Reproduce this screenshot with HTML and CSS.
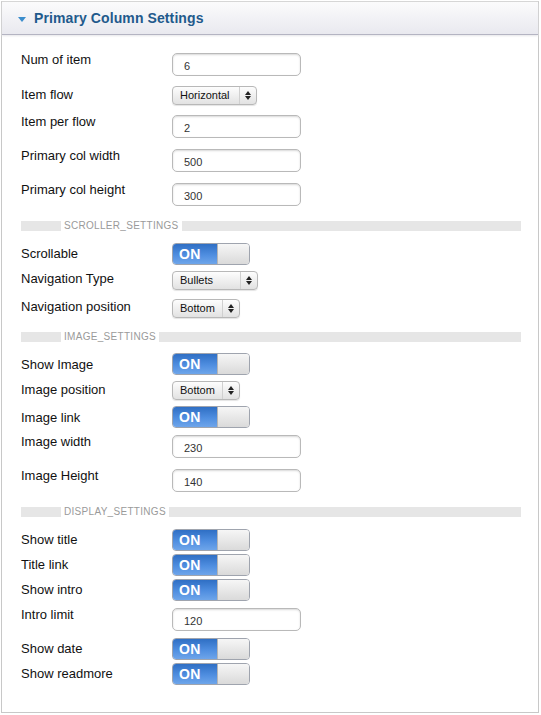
FILE: index.html
```html
<!DOCTYPE html>
<html lang="en">
<head>
  <meta charset="UTF-8">
  <title>Primary Column Settings</title>
  <link rel="stylesheet" href="styles.css">
</head>
<body>

  <div class="panel">
    <div class="panel-head">
      <span class="caret"></span>
      <h2>Primary Column Settings</h2>
    </div>

    <div class="panel-body">
      <div class="row row-input">
        <label>Num of item</label>
        <div class="field"><input type="text" value="6"></div>
      </div>
      <div class="row row-select">
        <label>Item flow</label>
        <div class="select" style="width:85px">Horizontal<span class="arrows"></span></div>
      </div>
      <div class="row row-input">
        <label>Item per flow</label>
        <div class="field"><input type="text" value="2"></div>
      </div>
      <div class="row row-input">
        <label>Primary col width</label>
        <div class="field"><input type="text" value="500"></div>
      </div>
      <div class="row row-input">
        <label>Primary col height</label>
        <div class="field"><input type="text" value="300"></div>
      </div>

      <div class="section"><span>SCROLLER_SETTINGS</span></div>

      <div class="row row-toggle">
        <label>Scrollable</label>
        <div class="toggle"><span class="on">ON</span><span class="knob"></span></div>
      </div>
      <div class="row row-select">
        <label>Navigation Type</label>
        <div class="select" style="width:86px">Bullets<span class="arrows"></span></div>
      </div>
      <div class="row row-select">
        <label>Navigation position</label>
        <div class="select" style="width:68px">Bottom<span class="arrows"></span></div>
      </div>

      <div class="section"><span>IMAGE_SETTINGS</span></div>

      <div class="row row-toggle">
        <label>Show Image</label>
        <div class="toggle"><span class="on">ON</span><span class="knob"></span></div>
      </div>
      <div class="row row-select">
        <label>Image position</label>
        <div class="select" style="width:68px">Bottom<span class="arrows"></span></div>
      </div>
      <div class="row row-toggle">
        <label>Image link</label>
        <div class="toggle"><span class="on">ON</span><span class="knob"></span></div>
      </div>
      <div class="row row-input">
        <label>Image width</label>
        <div class="field"><input type="text" value="230"></div>
      </div>
      <div class="row row-input">
        <label>Image Height</label>
        <div class="field"><input type="text" value="140"></div>
      </div>

      <div class="section"><span>DISPLAY_SETTINGS</span></div>

      <div class="row row-toggle">
        <label>Show title</label>
        <div class="toggle"><span class="on">ON</span><span class="knob"></span></div>
      </div>
      <div class="row row-toggle">
        <label>Title link</label>
        <div class="toggle"><span class="on">ON</span><span class="knob"></span></div>
      </div>
      <div class="row row-toggle">
        <label>Show intro</label>
        <div class="toggle"><span class="on">ON</span><span class="knob"></span></div>
      </div>
      <div class="row row-input">
        <label>Intro limit</label>
        <div class="field"><input type="text" value="120"></div>
      </div>
      <div class="row row-toggle">
        <label>Show date</label>
        <div class="toggle"><span class="on">ON</span><span class="knob"></span></div>
      </div>
      <div class="row row-toggle">
        <label>Show readmore</label>
        <div class="toggle"><span class="on">ON</span><span class="knob"></span></div>
      </div>
    </div>
  </div>

</body>
</html>
```

FILE: styles.css
```css
body {
  margin: 0;
  background: #fff;
  font-family: 'Liberation Sans', Arial, sans-serif;
  color: #111;
}

.panel {
  margin: 1px 0 0 1px;
  width: 536px;
  height: 710px;
  border: 1px solid #c8c8c8;
  border-top-color: #d4d4d4;
  background: #fff;
}

.panel-head {
  height: 32px;
  display: flex;
  align-items: center;
  padding-left: 15px;
  background: linear-gradient(#fbfbfc, #e9e9ef);
  border-bottom: 1px solid #b4b4c2;
  box-shadow: 0 1px 2px #e6e6ea;
}

.caret {
  width: 0;
  height: 0;
  border-left: 4px solid transparent;
  border-right: 4px solid transparent;
  border-top: 5px solid #3b8dcc;
  margin: 2px 8px 0 1px;
}

.panel-head h2 {
  margin: 0;
  font-size: 14px;
  font-weight: bold;
  color: #1f5a8c;
  letter-spacing: 0.1px;
}

.panel-body {
  padding: 12.5px 0 0 19px;
}

.row {
  display: flex;
  align-items: center;
}

.row label {
  width: 151px;
  font-size: 13px;
  color: #111;
}

.row-input {
  padding: 5.5px 0;
  align-items: flex-start;
}

.row-input label {
  line-height: 14px;
}

.row-select {
  padding: 4.5px 0;
}

.row-select label {
  padding-bottom: 3px;
}

.row-toggle {
  padding: 1.5px 0;
}

.field input {
  display: block;
  width: 129px;
  height: 23px;
  margin: 0;
  box-sizing: border-box;
  border: 1px solid #b9b9b9;
  border-radius: 5px;
  box-shadow: inset 0 1px 2px #d8d8d8;
  padding: 3px 0 0 11px;
  font-family: 'Liberation Sans', Arial, sans-serif;
  font-size: 11px;
  color: #333;
  outline: none;
}

.select {
  position: relative;
  height: 19px;
  box-sizing: border-box;
  border: 1px solid #b8b8b8;
  border-radius: 4px;
  background: linear-gradient(#fdfdfd, #e2e2e2);
  box-shadow: 0 1px 1px #e4e4e4;
  font-size: 11px;
  line-height: 17px;
  padding-left: 7px;
  color: #111;
}

.arrows {
  position: absolute;
  right: 0;
  top: 0;
  width: 16px;
  height: 17px;
  border-left: 1px solid #d0d0d0;
}

.arrows::before,
.arrows::after {
  content: "";
  position: absolute;
  left: 5px;
  border-left: 3px solid transparent;
  border-right: 3px solid transparent;
}

.arrows::before {
  top: 4px;
  border-bottom: 4px solid #222;
}

.arrows::after {
  top: 9px;
  border-top: 4px solid #222;
}

.toggle {
  display: flex;
  width: 78px;
  height: 22px;
  box-sizing: border-box;
  border: 1px solid #9fa4ae;
  border-radius: 4px;
  overflow: hidden;
}

.toggle .on {
  width: 44px;
  background: linear-gradient(#2f6fc4, #4f8ee0 55%, #6ea5ea);
  color: #fff;
  font-weight: bold;
  font-size: 14px;
  line-height: 21px;
  padding-left: 6px;
  box-sizing: border-box;
  letter-spacing: 0.3px;
}

.toggle .knob {
  flex: 1;
  background: linear-gradient(#f6f6f6, #dadada);
  border-left: 1px solid #b5b5b5;
}

.section {
  display: flex;
  align-items: center;
  width: 500px;
  height: 10px;
  margin: 9.5px 0 10px;
  background: #e6e6e6;
}

.section span {
  margin-left: 40px;
  padding: 0 3px;
  background: #fff;
  font-size: 10px;
  line-height: 10px;
  color: #9a9a9a;
  letter-spacing: 0.3px;
}
```
